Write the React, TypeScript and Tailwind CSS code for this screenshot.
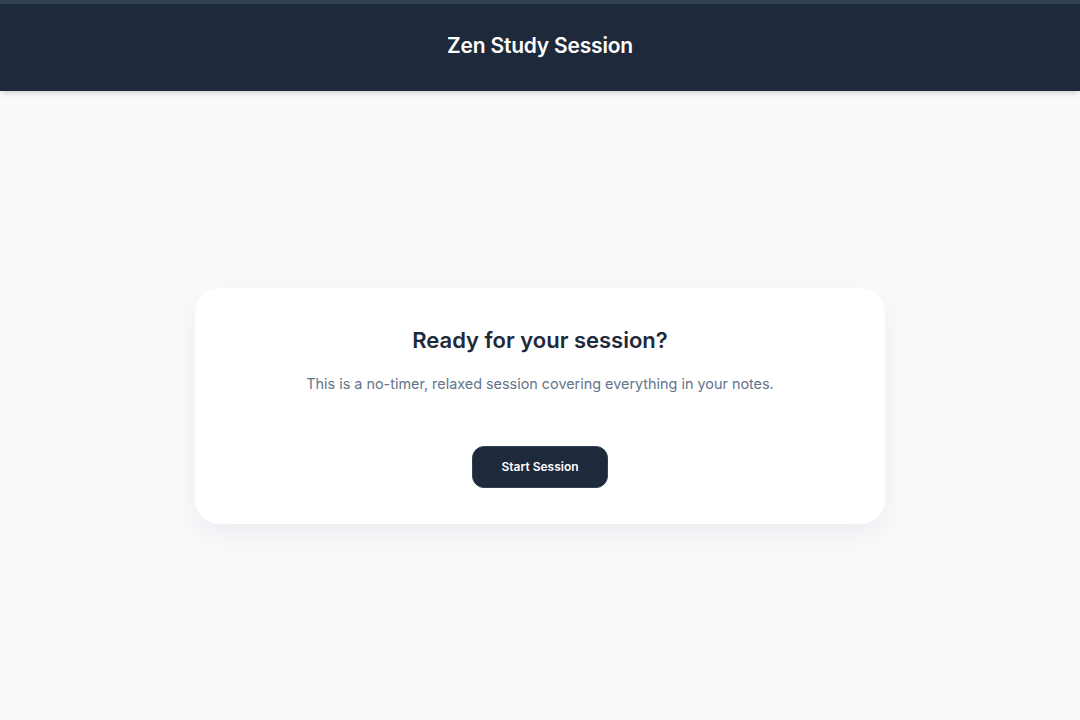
export default function App() {
  return (
    <div className="min-h-screen flex flex-col bg-[#f8fafc]" style={{ fontFamily: "Inter, 'Noto Sans', sans-serif" }}>
      <div className="h-[4px] bg-[#334155]" />
      <header className="h-[87px] pb-[4px] bg-[#1e293b] flex items-center justify-center shadow-md relative z-10">
        <h1 className="text-[21px] font-semibold text-white tracking-[-0.01em]">Zen Study Session</h1>
      </header>
      <main className="flex-1 flex items-center justify-center">
        <div className="w-[690px] bg-white rounded-3xl shadow-[0_10px_30px_rgba(15,23,42,0.06)] px-10 pt-[36px] pb-[36px] flex flex-col items-center">
          <h2 className="text-[22px] leading-8 font-semibold text-[#1e293b]">Ready for your session?</h2>
          <p className="mt-[16px] text-[14.4px] leading-6 text-[#64748b]">This is a no-timer, relaxed session covering everything in your notes.</p>
          <button className="mt-[50px] h-[42px] px-[28px] rounded-xl bg-[#1e293b] border border-[#334155] text-white text-[12px] font-semibold">Start Session</button>
        </div>
      </main>
    </div>
  );
}
